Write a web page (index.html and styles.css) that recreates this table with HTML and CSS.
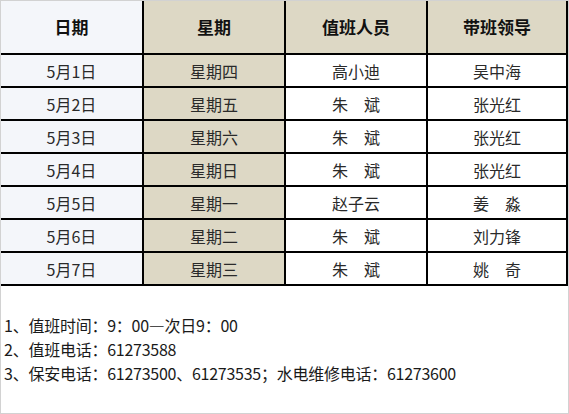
FILE: index.html
```html
<!DOCTYPE html>
<html lang="zh-CN">
<head>
<meta charset="utf-8">
<title>值班表</title>
<link rel="stylesheet" href="styles.css">
</head>
<body>
<div class="frame">
  <table class="duty">
    <thead>
      <tr>
        <th class="c1 date">日期</th>
        <th class="c2 week">星期</th>
        <th class="c3 head">值班人员</th>
        <th class="c4 head">带班领导</th>
      </tr>
    </thead>
    <tbody>
      <tr><td class="date">5月1日</td><td class="week">星期四</td><td>高小迪</td><td>吴中海</td></tr>
      <tr><td class="date">5月2日</td><td class="week">星期五</td><td>朱　斌</td><td>张光红</td></tr>
      <tr><td class="date">5月3日</td><td class="week">星期六</td><td>朱　斌</td><td>张光红</td></tr>
      <tr><td class="date">5月4日</td><td class="week">星期日</td><td>朱　斌</td><td>张光红</td></tr>
      <tr><td class="date">5月5日</td><td class="week">星期一</td><td>赵子云</td><td>姜　淼</td></tr>
      <tr><td class="date">5月6日</td><td class="week">星期二</td><td>朱　斌</td><td>刘力锋</td></tr>
      <tr><td class="date">5月7日</td><td class="week">星期三</td><td>朱　斌</td><td>姚　奇</td></tr>
    </tbody>
  </table>
  <div class="notes">
    <p>1、值班时间：9：00—次日9：00</p>
    <p>2、值班电话：61273588</p>
    <p>3、保安电话：61273500、61273535；水电维修电话：61273600</p>
  </div>
</div>
</body>
</html>
```
FILE: styles.css
```css
html, body {
  margin: 0;
  padding: 0;
  background: #ffffff;
}

body {
  width: 569px;
  height: 414px;
  overflow: hidden;
  font-family: "Noto Sans CJK SC", "Noto Sans", sans-serif;
  color: #222222;
}

.frame {
  box-sizing: border-box;
  width: 569px;
  height: 414px;
  border: 1px solid #d2d2d2;
  background: #ffffff;
}

.duty {
  border-collapse: separate;
  border-spacing: 0;
  table-layout: fixed;
  width: 567px;
}

.duty th,
.duty td {
  padding: 0;
  text-align: center;
  vertical-align: middle;
  border-right: 2px solid #000000;
  border-bottom: 2px solid #000000;
  white-space: nowrap;
}

.duty th {
  height: 52px;
  font-size: 17px;
  font-weight: 700;
  color: #111111;
  line-height: 22px;
}

.duty td {
  height: 31px;
  font-size: 16px;
  line-height: 20px;
  color: #2a2a2a;
}

.c1 { width: 141px; }
.c2 { width: 140px; }
.c3 { width: 140px; }
.c4 { width: 138px; }

.date {
  background: #f4f6fa;
}

.week,
.head {
  background: #ddd8c5;
}

.notes {
  margin-top: 27px;
  padding-left: 3px;
  font-size: 16px;
  line-height: 24px;
  letter-spacing: -0.25px;
  color: #1a1a1a;
}

.notes p {
  margin: 0;
  white-space: nowrap;
}
```
